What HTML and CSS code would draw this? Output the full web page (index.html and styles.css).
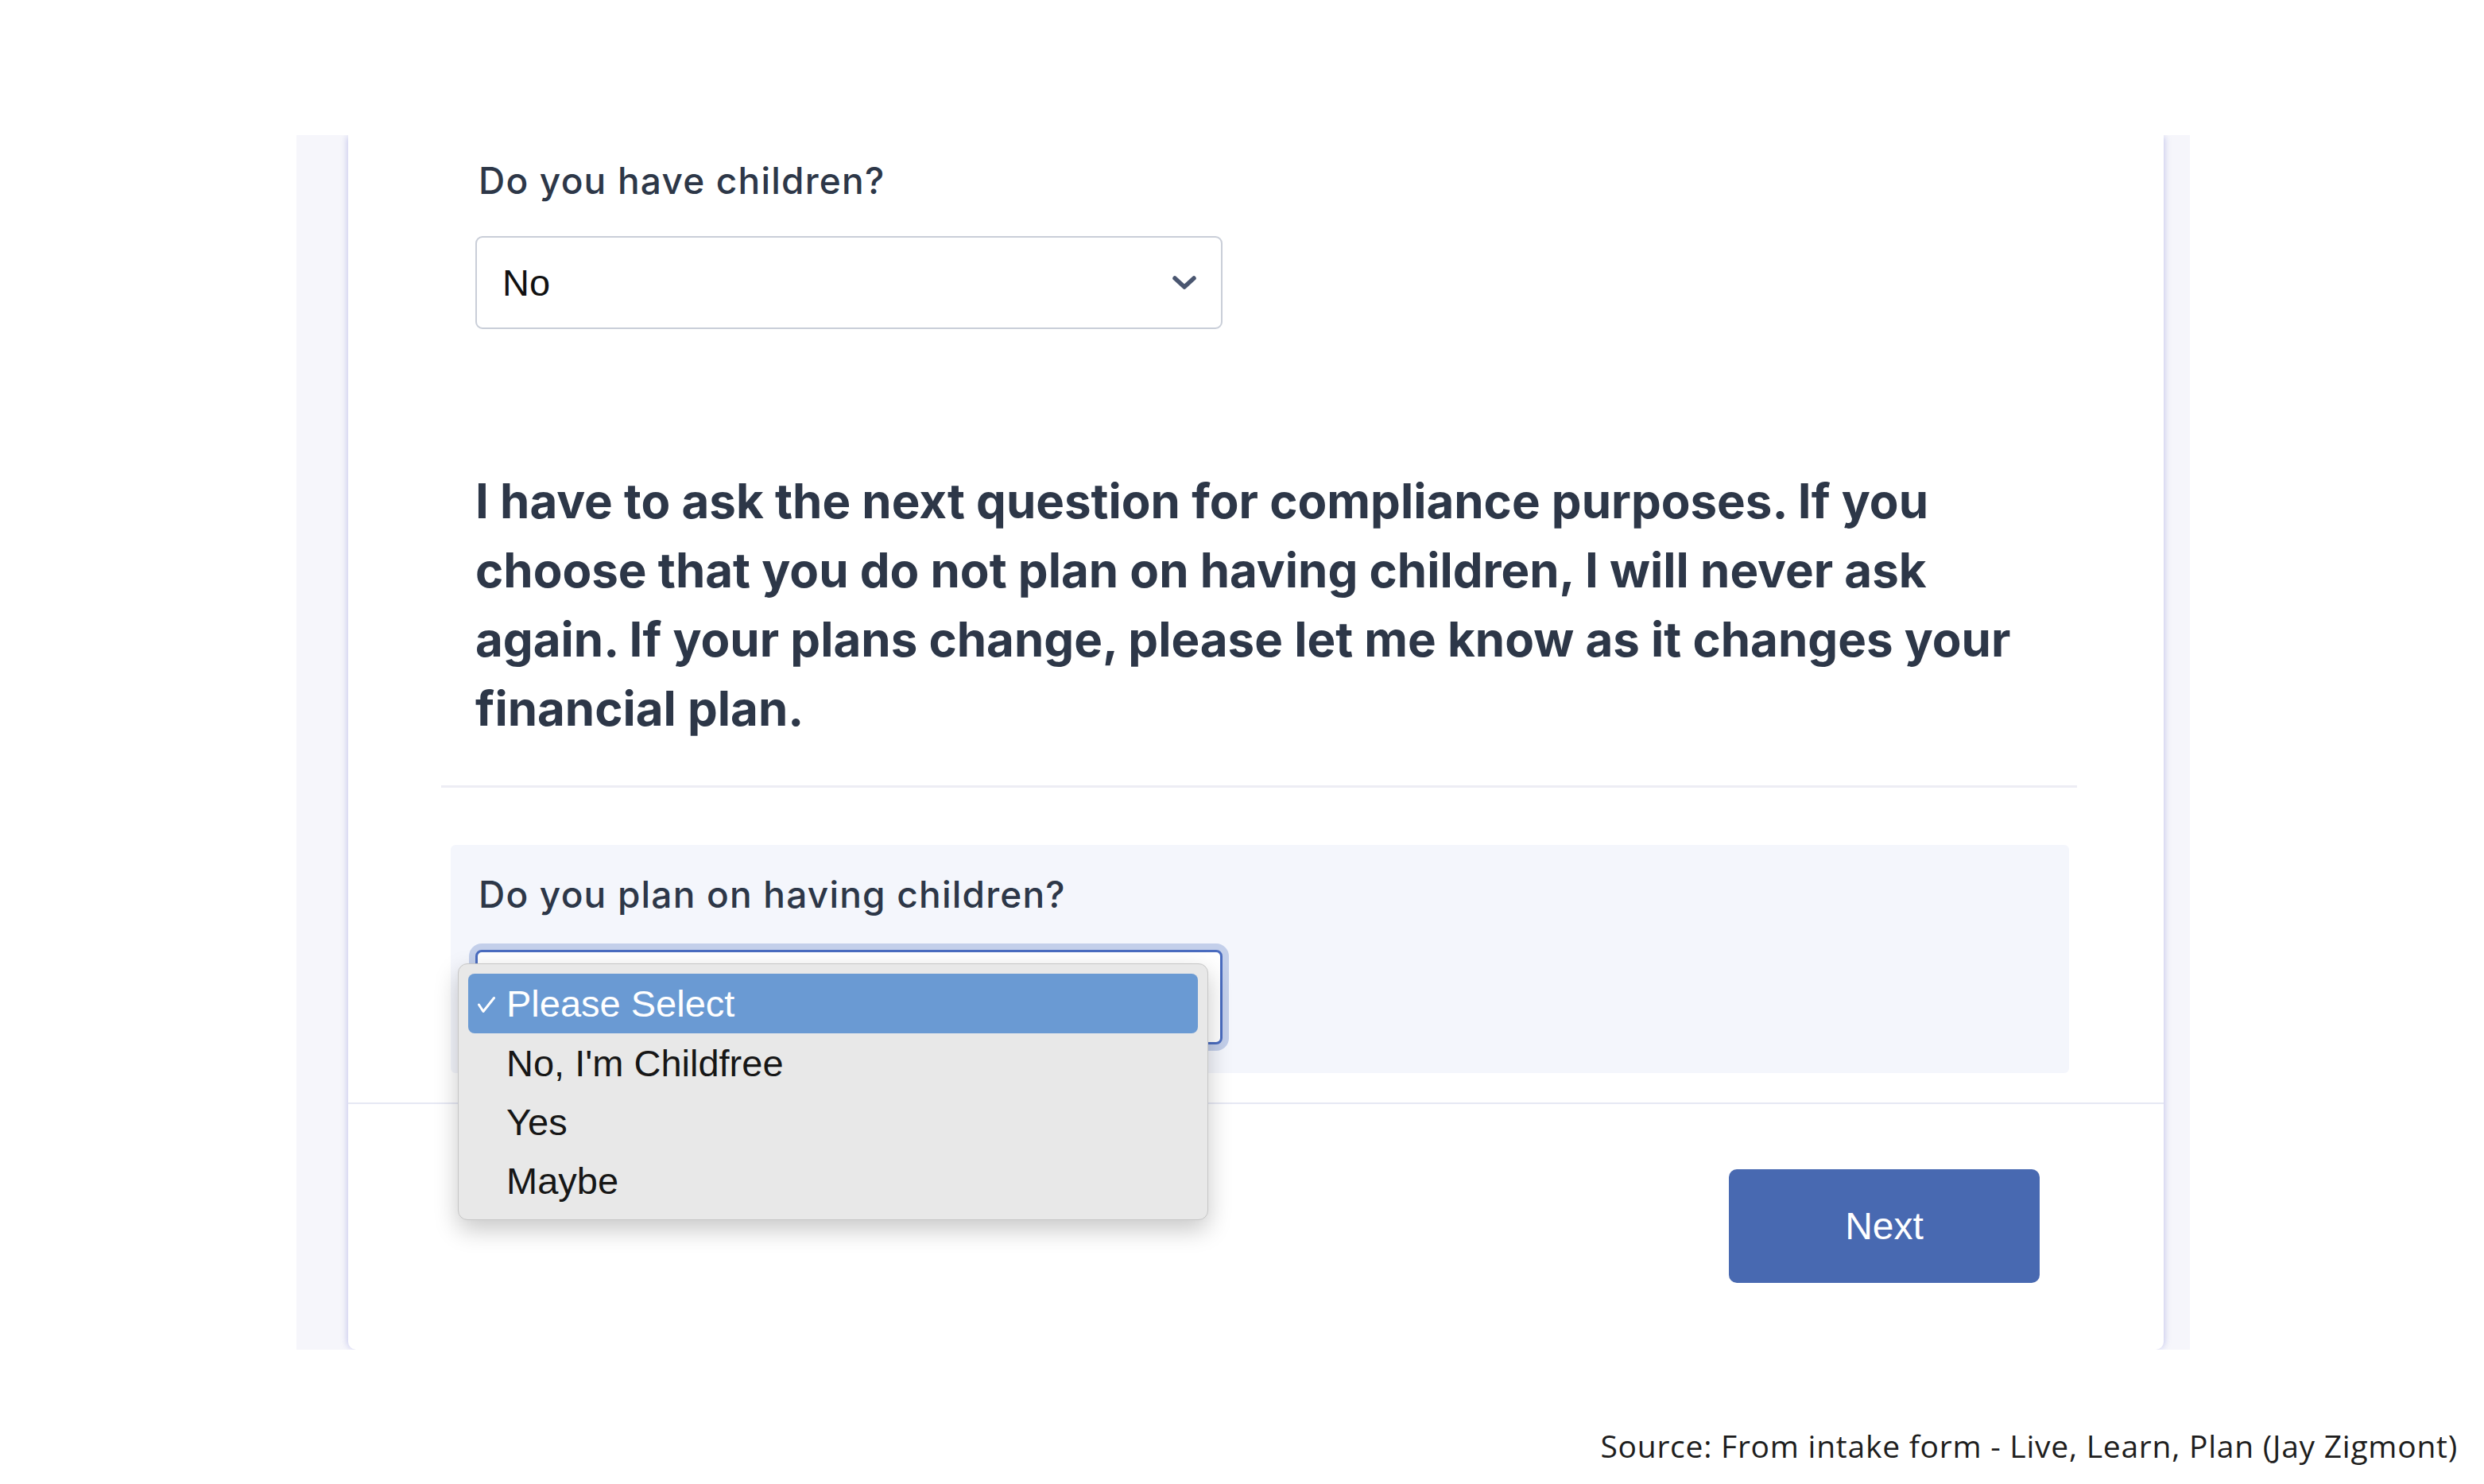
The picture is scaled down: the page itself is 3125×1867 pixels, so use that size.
FILE: index.html
```html
<!DOCTYPE html>
<html lang="en">
<head>
<meta charset="utf-8">
<title>Intake form</title>
<link rel="stylesheet" href="styles.css">
</head>
<body>
<div class="stage">
  <div class="frame">
    <div class="card">
      <div class="q1">
        <div class="label">Do you have children?</div>
        <div class="select">
          <span class="value">No</span>
          <svg class="chev" viewBox="0 0 32 20" width="32" height="20"><polyline points="4,4 16,15 28,4" fill="none" stroke="#4a5670" stroke-width="5.5" stroke-linecap="round" stroke-linejoin="round"/></svg>
        </div>
      </div>
      <p class="notice">I have to ask the next question for compliance purposes. If you choose that you do not plan on having children, I will never ask again. If your plans change, please let me know as it changes your financial plan.</p>
      <div class="divider"></div>
      <div class="q2box">
        <div class="label">Do you plan on having children?</div>
        <div class="select-wrap">
          <div class="select focused"></div>
          <ul class="menu">
            <li class="item selected"><svg class="check" viewBox="0 0 24 22" width="24" height="22"><polyline points="2.5,11 8,19.5 21.5,2.5" fill="none" stroke="#ffffff" stroke-width="3" stroke-linecap="round" stroke-linejoin="round"/></svg>Please Select</li>
            <li class="item">No, I'm Childfree</li>
            <li class="item">Yes</li>
            <li class="item">Maybe</li>
          </ul>
        </div>
      </div>
      <div class="footer">
        <button class="next">Next</button>
      </div>
    </div>
  </div>
  <div class="source">Source: From intake form - Live, Learn, Plan (Jay Zigmont)</div>
</div>
</body>
</html>
```

FILE: styles.css
```css
* { box-sizing: border-box; }
html, body { margin: 0; padding: 0; background: #ffffff; }
body { width: 3125px; height: 1867px; overflow: hidden; font-family: Inter, "Liberation Sans", sans-serif; }

.stage { padding-top: 170px; }

.frame {
  margin-left: 373px;
  width: 2382px;
  height: 1528px;
  background: #f6f6fb;
  padding-left: 65px;
  padding-right: 33px;
  display: flex;
  overflow: hidden;
}

.card {
  flex: 1;
  background: #ffffff;
  border-bottom-left-radius: 10px;
  border-bottom-right-radius: 10px;
  box-shadow: -4px 0 7px -2px rgba(196, 198, 236, 0.8), 4px 0 7px -2px rgba(196, 198, 236, 0.8);
  display: flex;
  flex-direction: column;
}

.q1 { padding: 30px 0 0 160px; }
.q1 .label { margin-left: 4px; }

.label {
  font-family: Inter, "Liberation Sans", sans-serif;
  font-weight: 500;
  font-size: 46px;
  letter-spacing: 1.2px;
  line-height: 54px;
  color: #2d3748;
}

.select {
  margin-top: 43px;
  width: 940px;
  height: 117px;
  border: 2px solid #c9ced8;
  border-radius: 9px;
  background: #ffffff;
  display: flex;
  align-items: center;
  justify-content: space-between;
  padding: 0 30px 0 32px;
}
.select .value {
  font-family: "Liberation Sans", Arial, sans-serif;
  font-size: 47px;
  color: #111111;
}

.notice {
  margin: 173px 0 0 160px;
  width: 1980px;
  font-family: Inter, "Liberation Sans", sans-serif;
  font-weight: 700;
  font-size: 60px;
  letter-spacing: 0;
  line-height: 87px;
  color: #2d3748;
}

.divider {
  margin: 53px 109px 0 117px;
  height: 3px;
  background: #ededf4;
}

.q2box {
  margin: 72px 119px 0 129px;
  height: 287px;
  background: #f4f6fc;
  border-radius: 6px;
  padding: 35px 0 0 35px;
}

.select-wrap { position: relative; width: 940px; margin-top: 43px; margin-left: -4px; }
.select.focused {
  margin-top: 0;
  height: 119px;
  border: 3px solid #4a6cbf;
  border-radius: 8px;
  box-shadow: 0 0 0 8px #c3cfea;
}

.menu {
  position: absolute;
  left: -22px;
  top: 17px;
  width: 944px;
  margin: 0;
  padding: 12px 12px 12px 12px;
  list-style: none;
  background: #e8e8e8;
  border: 1px solid #c6c6c6;
  border-radius: 12px;
  box-shadow: 0 12px 30px rgba(0, 0, 0, 0.22);
  z-index: 5;
}
.item {
  height: 74px;
  display: flex;
  align-items: center;
  padding-left: 48px;
  font-family: "Liberation Sans", Arial, sans-serif;
  font-size: 47px;
  color: #161616;
  border-radius: 8px;
  position: relative;
}
.item.selected {
  height: 75px;
  background: #6a9ad3;
  color: #ffffff;
}
.check { position: absolute; left: 11px; top: 28px; }

.footer {
  margin-top: 37px;
  border-top: 2px solid #e6e8f4;
  flex: 1;
  display: flex;
  justify-content: flex-end;
  align-items: flex-start;
  padding: 82px 156px 0 0;
}
.next {
  width: 391px;
  height: 143px;
  border: none;
  border-radius: 10px;
  background: #4869b1;
  color: #ffffff;
  font-family: "Liberation Sans", Arial, sans-serif;
  font-size: 48px;
}

.source {
  display: flex;
  justify-content: flex-end;
  padding: 97px 33px 0 0;
  font-family: "Open Sans", "Noto Sans", sans-serif;
  font-size: 39px;
  letter-spacing: 0.75px;
  line-height: 48px;
  color: #1e1e1e;
}
```
